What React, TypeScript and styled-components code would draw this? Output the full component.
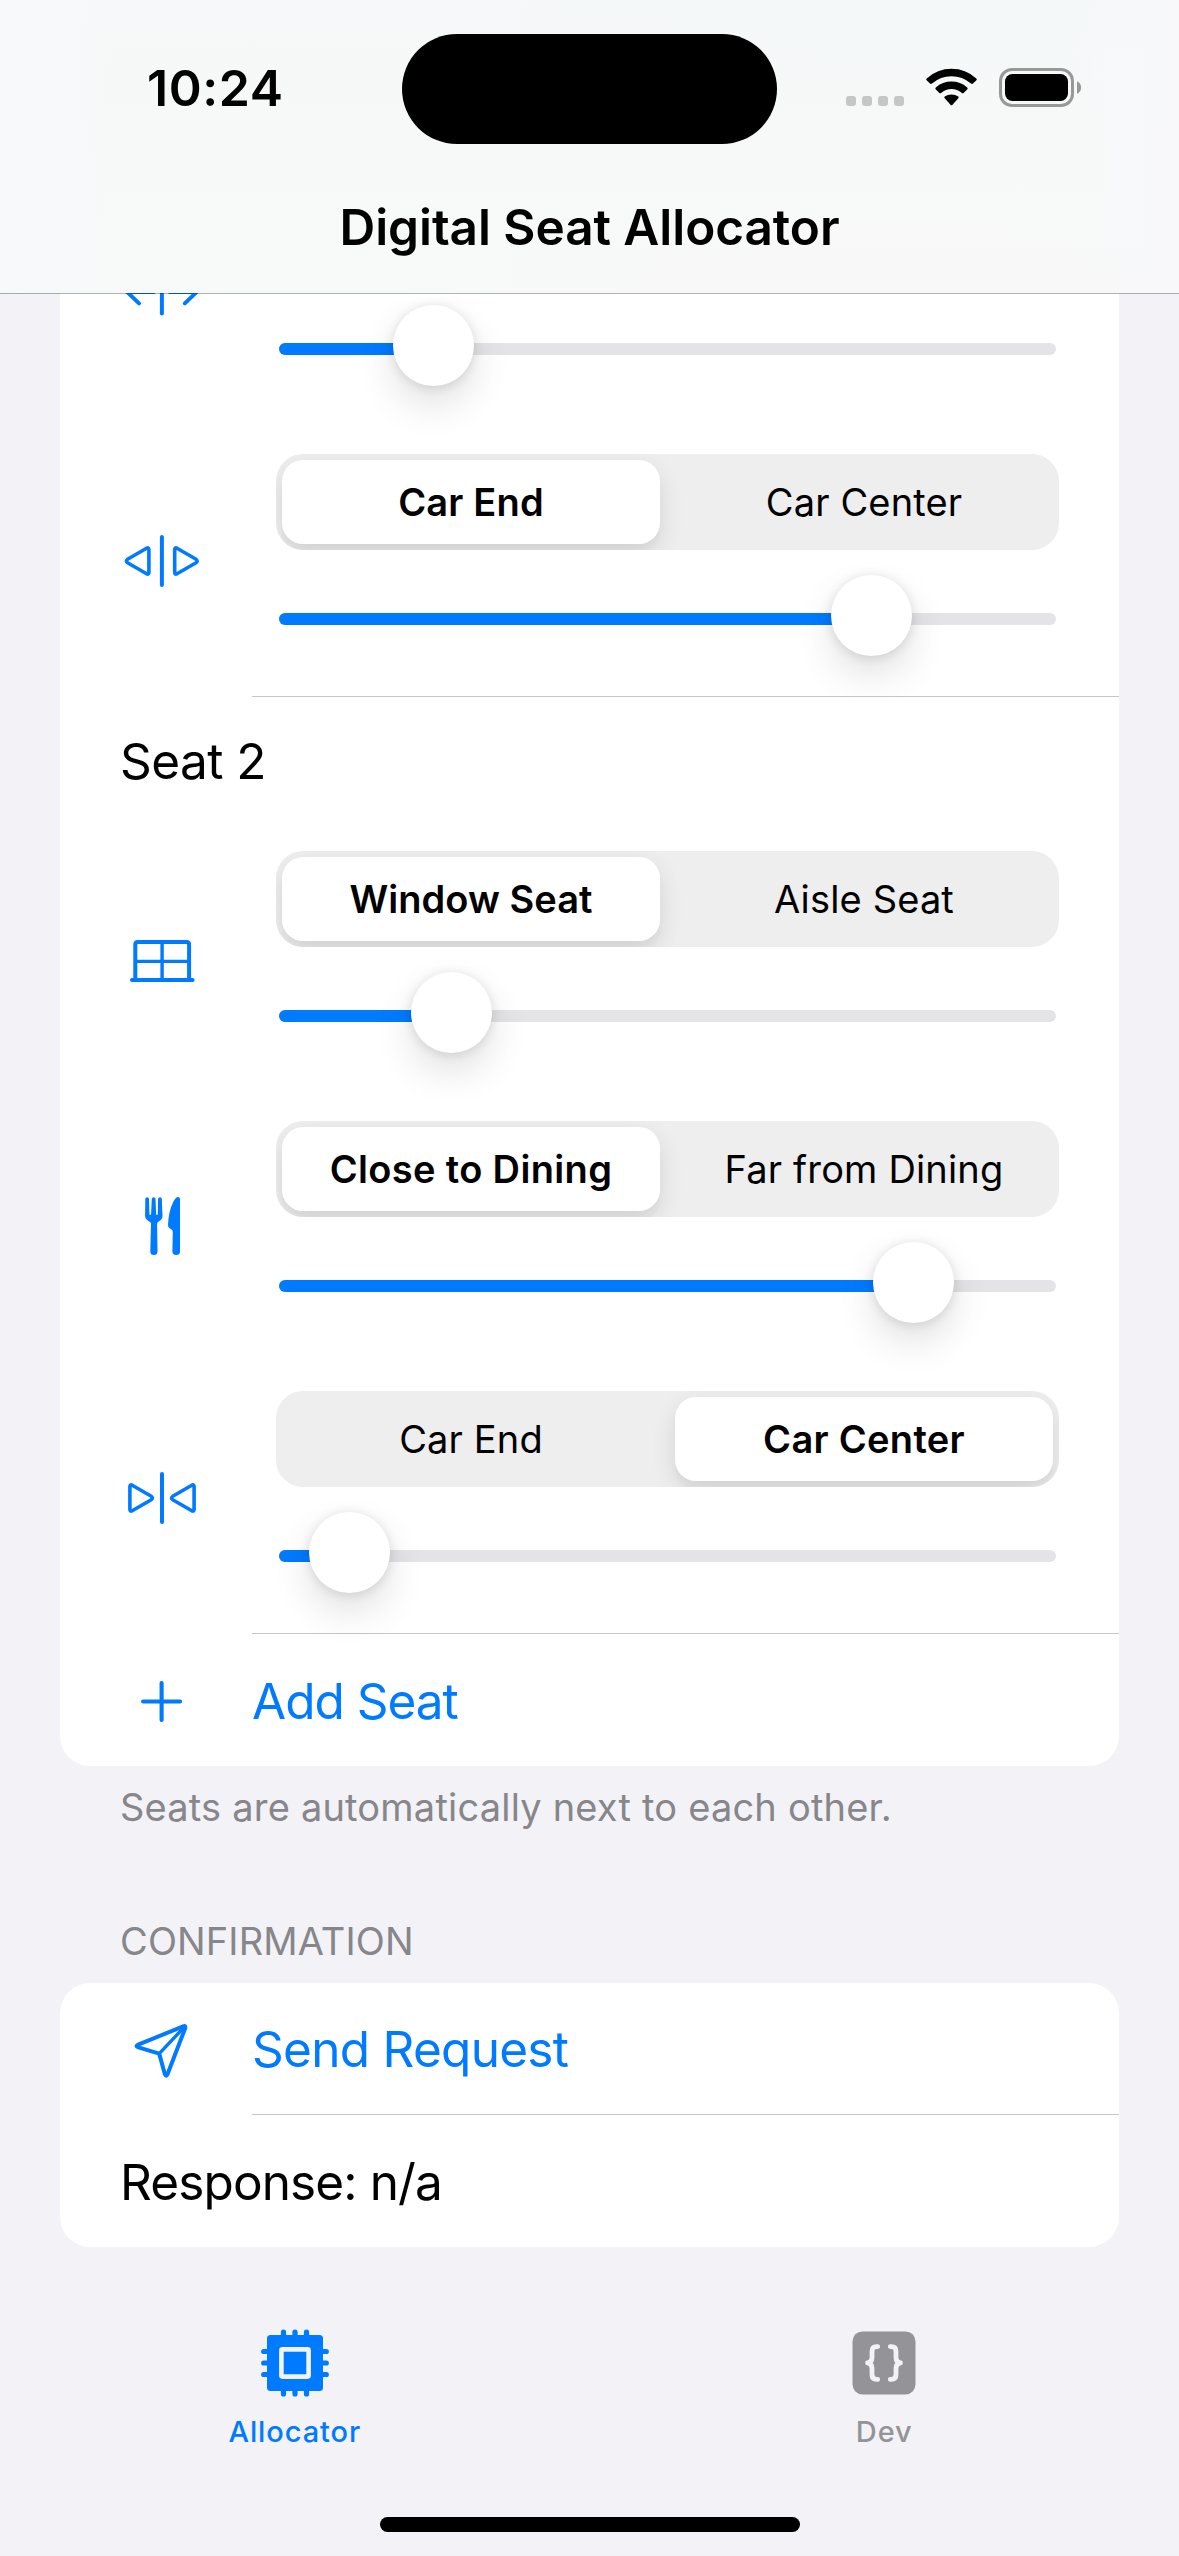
import React from "react";
import styled, { createGlobalStyle } from "styled-components";

const BLUE = "#007aff";
const PAGE = "#f2f2f7";
const HAIRLINE = "#c6c6c8";

const GlobalStyle = createGlobalStyle`
  * { box-sizing: border-box; }
  body {
    margin: 0;
    background: ${PAGE};
    font-family: Inter, "Liberation Sans", sans-serif;
    color: #000;
  }
`;

const Screen = styled.div`
  width: 1179px;
  height: 2556px;
  overflow: hidden;
  display: flex;
  flex-direction: column;
  background: ${PAGE};
`;

/* ---------- Header ---------- */

const Header = styled.header`
  position: relative;
  z-index: 1;
  flex: none;
  height: 294px;
  background:
    linear-gradient(90deg, #f8f9fb 0, rgba(248, 249, 251, 0) 110px, rgba(248, 249, 251, 0) 1069px, #f8f8fb 1179px),
    linear-gradient(100deg, rgba(247, 249, 249, 0.8) 0%, rgba(247, 247, 247, 0) 75%),
    linear-gradient(180deg, #f5f8f9 0%, #f7f9f8 50%, #f8f8f8 100%);
  background-clip: padding-box;
  border-bottom: 1px solid rgba(0, 0, 0, 0.3);
`;

const StatusBar = styled.div`
  display: grid;
  grid-template-columns: 402px 375px 402px;
  align-items: center;
  height: 177px;
`;

const Clock = styled.div`
  padding: 0 0 2px 147px;
  font-size: 50px;
  line-height: 60px;
  font-weight: 580;
  letter-spacing: 0.6px;
`;

const Island = styled.div`
  height: 110px;
  margin-top: 1px;
  border-radius: 55px;
  background: #000;
`;

const Indicators = styled.div`
  display: flex;
  align-items: flex-end;
  height: 39px;
  margin-bottom: 2px;
  padding-left: 69px;
`;

const Dots = styled.div`
  display: flex;
  gap: 6px;
  margin: 0 22px 1px 0;
`;

const Dot = styled.span`
  width: 10px;
  height: 10px;
  border-radius: 3px;
  background: #c6c6c6;
`;

const TitleBar = styled.div`
  display: flex;
  align-items: center;
  justify-content: center;
  height: 116px;
  padding-bottom: 16px;
`;

const Title = styled.h1`
  margin: 0;
  font-size: 49.5px;
  line-height: 60px;
  font-weight: 580;
  letter-spacing: -0.05px;
`;

/* ---------- Form ---------- */

const Form = styled.main`
  flex: none;
  height: 2014px;
  margin-top: -1px;
  padding: 0 60px;
`;

const Card = styled.section<{ $scrolled?: boolean }>`
  background: #fff;
  border-radius: ${(p) => (p.$scrolled ? "0 0 30px 30px" : "30px")};
`;

const Separator = styled.div`
  height: 1px;
  margin-left: 192px;
  background: ${HAIRLINE};
`;

const SeatTitle = styled.div`
  display: flex;
  align-items: center;
  height: 154px;
  padding: 0 0 26px 60px;
  font-size: 49.5px;
  line-height: 60px;
  font-weight: 420;
  letter-spacing: -0.55px;
`;

const PreferenceRow = styled.div<{ $height: number }>`
  display: flex;
  height: ${(p) => p.$height}px;
`;

const IconCell = styled.div<{ $top?: number }>`
  display: flex;
  flex: none;
  justify-content: center;
  align-items: flex-start;
  width: 192px;
  padding-left: 12px;
  margin-top: ${(p) => p.$top ?? 0}px;
  color: ${BLUE};
`;

const Controls = styled.div<{ $top?: number }>`
  width: 783px;
  margin-left: 24px;
  padding-top: ${(p) => p.$top ?? 0}px;
`;

const SegmentedTrack = styled.div`
  display: grid;
  grid-template-columns: 378px 378px;
  column-gap: 15px;
  height: 96px;
  margin-bottom: 25px;
  padding: 6px;
  border-radius: 27px;
  background: #eee;
  overflow: hidden;
`;

const Segment = styled.div<{ $on: boolean; $tracking: number }>`
  display: flex;
  align-items: center;
  justify-content: center;
  height: 84px;
  border-radius: 21px;
  font-size: 38px;
  line-height: 48px;
  white-space: nowrap;
  font-weight: ${(p) => (p.$on ? 560 : 425)};
  letter-spacing: ${(p) => p.$tracking}px;
  background: ${(p) => (p.$on ? "#fff" : "transparent")};
  box-shadow: ${(p) => (p.$on ? "0 9px 24px rgba(0,0,0,.11), 0 9px 3px rgba(0,0,0,.02)" : "none")};
`;

const SliderBox = styled.div`
  display: grid;
  height: 81px;
  padding: 0 3px;
`;

const SliderRail = styled.div`
  grid-area: 1 / 1;
  height: 12px;
  margin-top: 38px;
  border-radius: 6px;
  background: #e4e4e6;
  overflow: hidden;
`;

const SliderFill = styled.div`
  height: 12px;
  background: ${BLUE};
`;

const Thumb = styled.div`
  grid-area: 1 / 1;
  width: 81px;
  height: 81px;
  border-radius: 50%;
  background: #fff;
  box-shadow: 0 18px 39px rgba(0, 0, 0, 0.12), 0 1.5px 12px rgba(0, 0, 0, 0.12);
`;

const ActionRow = styled.div<{ $height?: number }>`
  display: flex;
  align-items: center;
  height: ${(p) => p.$height ?? 132}px;
`;

const ActionLabel = styled.span<{ $tracking: number }>`
  padding: 1px 0 0 0;
  font-size: 49.5px;
  line-height: 60px;
  font-weight: 420;
  letter-spacing: ${(p) => p.$tracking}px;
  color: ${BLUE};
`;

const PlainLabel = styled.span`
  padding: 2px 0 0 60px;
  font-size: 49.5px;
  line-height: 60px;
  font-weight: 420;
  letter-spacing: -0.88px;
`;

const Footnote = styled.p`
  margin: 0;
  padding: 17px 0 0 60px;
  font-size: 38px;
  line-height: 48px;
  font-weight: 420;
  letter-spacing: 0.2px;
  color: #86868b;
`;

const SectionHeader = styled.h2`
  margin: 0;
  padding: 86px 0 18px 60px;
  font-size: 38px;
  line-height: 48px;
  font-weight: 420;
  letter-spacing: 0.12px;
  color: #86868b;
`;

/* ---------- Tab bar ---------- */

const TabBar = styled.nav`
  display: grid;
  grid-template-columns: 1fr 1fr;
  flex: none;
  height: 210px;
`;

const Tab = styled.div<{ $active?: boolean }>`
  display: flex;
  flex-direction: column;
  align-items: center;
  gap: 17px;
  padding-top: 22px;
  color: ${(p) => (p.$active ? BLUE : "#949498")};
`;

const TabLabel = styled.span`
  font-size: 29px;
  line-height: 36px;
  font-weight: 500;
  letter-spacing: 0.9px;
`;

const HomeIndicator = styled.div`
  flex: none;
  width: 420px;
  height: 15px;
  margin: 0 auto;
  border-radius: 8px;
  background: #000;
`;

/* ---------- Icons ---------- */

const RowSvg: React.FC<{ children: React.ReactNode }> = ({ children }) => (
  <svg
    width="80"
    height="64"
    viewBox="0 0 80 64"
    fill="none"
    stroke="currentColor"
    strokeWidth="3.6"
    strokeLinecap="round"
    strokeLinejoin="round"
  >
    {children}
  </svg>
);

const TRIANGLE = "M24.6 19.2 L5.5 30.3 Q3.3 32 5.5 33.7 L24.6 44.8 Q26.9 45.8 26.9 43.5 V20.5 Q26.9 18.2 24.6 19.2Z";

const ArrowsApart = () => (
  <RowSvg>
    <g strokeWidth="4">
      <path d="M39.9 11.3V54.5" />
      <path d="M32 32.9H6M16.7 21.1L5 32.9L17 44.4" />
      <path d="M47.8 32.9H73.8M63.1 21.1L74.8 32.9L62.8 44.4" />
    </g>
  </RowSvg>
);

const TrianglesApart = () => (
  <RowSvg>
    <path d="M39.9 8.1V55.9" strokeWidth="4" />
    <path d={TRIANGLE} />
    <path d={TRIANGLE} transform="translate(79.6 0) scale(-1 1)" />
  </RowSvg>
);

const TrianglesTogether = () => (
  <RowSvg>
    <path d="M40 8.1V55.9" strokeWidth="4" />
    <path d={TRIANGLE} transform="translate(34.8 0) scale(-1 1)" />
    <path d={TRIANGLE} transform="translate(45.2 0)" />
  </RowSvg>
);

const WindowIcon = () => (
  <RowSvg>
    <path d="M13.3 54V18.5Q13.3 16 15.8 16H64.6Q67.1 16 67.1 18.5V54" strokeWidth="4" />
    <path d="M10 54H70.6" strokeWidth="4" />
    <path d="M40.1 16V54M13.3 35.4H67.1" strokeWidth="3.4" strokeLinecap="butt" />
  </RowSvg>
);

const DiningIcon = () => (
  <RowSvg>
    <g fill="currentColor" stroke="none">
      <path d="M25.1 1.2Q26.9 1.2 27 2.8L27.4 18.2Q28.2 19.7 29.1 18.2L29.8 2.8Q30 1.2 31.7 1.2Q33.3 1.2 33.5 2.8L34.1 18.2Q35 19.7 35.8 18.2L36.1 2.8Q36.2 1.2 38 1.2Q39.7 1.2 39.8 2.8L40.5 20Q40.6 23.2 36.7 25.4Q35.1 26.4 35.1 27.6L35.5 55.5Q35.4 59 31.9 59Q28.3 59 28.3 55.5L29 27.6Q29 26.4 27.3 25.4Q23.1 23.2 23.1 20L23.3 2.8Q23.4 1.2 25.1 1.2Z" />
      <path d="M58 3Q58 .9 55.9 .9Q53.8 .9 51.5 5.5Q46.5 15 46 29Q46 31.2 47.6 32.3L49.8 33.7Q50.9 34.5 50.8 36L50.4 55.5Q50.6 59 54.2 59Q58 59 58 55.5Z" />
    </g>
  </RowSvg>
);

const PlusIcon = () => (
  <RowSvg>
    <path d="M39.6 15V52M21.1 33.5H58.1" strokeWidth="4.1" />
  </RowSvg>
);

const PlaneIcon = () => (
  <RowSvg>
    <g strokeWidth="4">
      <path d="M61.2 9.4L16.2 27.6Q12.8 29.1 16.4 30.4L37.2 36.6L42.8 57Q44.2 60.6 45.6 57L63.2 11.2Q63.9 8.3 61.2 9.4Z" />
      <path d="M37.2 36.6L61.8 10.6" strokeWidth="3.4" />
    </g>
  </RowSvg>
);

const WifiSvg = styled.svg`
  margin: 0 22px 1px 0;
`;

const WifiIcon = () => (
  <WifiSvg width="51" height="38" viewBox="0 0 51 38">
    <path d="M0.6 12.2Q-.2 11.3.7 10.4Q11.3.7 25.5.7T50.3 10.4Q51.2 11.3 50.4 12.2L47 15.6Q46 16.3 45 15.5Q36.5 8.2 25.5 8.2T6 15.5Q5 16.3 4 15.6Z" />
    <path d="M9.6 21.2Q8.9 20.3 9.8 19.5Q16.5 13.6 25.5 13.6T41.2 19.5Q42.1 20.3 41.4 21.2L37.6 24.9Q36.8 25.6 35.9 24.9Q31.3 21.1 25.5 21.1T15.1 24.9Q14.2 25.6 13.4 24.9Z" />
    <path d="M18.5 29.9Q17.9 29.1 18.7 28.5Q21.6 26.4 25.5 26.4T32.3 28.5Q33.1 29.1 32.5 29.9L26.3 36.9Q25.5 37.7 24.7 36.9Z" />
  </WifiSvg>
);

const BatteryIcon = () => (
  <svg width="83" height="39" viewBox="0 0 83 39">
    <rect x="1.5" y="1.5" width="72" height="36" rx="11.5" fill="none" stroke="#989898" strokeWidth="3" />
    <rect x="6" y="6" width="63" height="27" rx="7.5" />
    <path d="M78 13.2Q82.1 15.2 82.1 19.5T78 25.8Z" fill="#989898" />
  </svg>
);

const PINS = [-11.5, 0, 11.5];

const ChipIcon = () => (
  <svg width="70" height="68" viewBox="-35 -34 70 68" fill="currentColor">
    <rect x="-28" y="-28" width="56" height="56" rx="3.5" />
    {PINS.map((p) => (
      <g key={p} stroke="currentColor" strokeWidth="5.2" strokeLinecap="round">
        <path d={`M${p} -31V31M-31.3 ${p}H31.3`} />
      </g>
    ))}
    <rect x="-13.6" y="-13.6" width="27.2" height="27.2" rx="1" stroke={PAGE} strokeWidth="4.6" />
  </svg>
);

const BracesIcon = () => (
  <svg width="70" height="68" viewBox="-35 -34 70 68">
    <rect x="-31.5" y="-31.6" width="63" height="63" rx="10" fill="currentColor" />
    <g fill="none" stroke={PAGE} strokeWidth="4.8" strokeLinecap="round" strokeLinejoin="round">
      <path d="M-6.3 -16.4H-7.5Q-12 -16.4 -12 -11.6V-5.2Q-12 -1 -16.4 -.1Q-12 .8 -12 5V11.6Q-12 16.4 -7.5 16.4H-6.3" />
      <path d="M6.3 -16.4H7.5Q12 -16.4 12 -11.6V-5.2Q12 -1 16.4 -.1Q12 .8 12 5V11.6Q12 16.4 7.5 16.4H6.3" />
    </g>
  </svg>
);

/* ---------- Parts ---------- */

const Slider: React.FC<{ offset: number }> = ({ offset }) => (
  <SliderBox>
    <SliderRail>
      <SliderFill style={{ width: offset + 40 }} />
    </SliderRail>
    <Thumb style={{ marginLeft: offset }} />
  </SliderBox>
);

type Option = { label: string; tracking: number };

const Segmented: React.FC<{ options: Option[]; selected: number }> = ({ options, selected }) => (
  <SegmentedTrack>
    {options.map((o, i) => (
      <Segment key={o.label} $on={i === selected} $tracking={o.tracking}>
        {o.label}
      </Segment>
    ))}
  </SegmentedTrack>
);

type PreferenceProps = {
  icon: React.ReactNode;
  options: Option[];
  selected: number;
  offset: number;
  last?: boolean;
};

const Preference: React.FC<PreferenceProps> = ({ icon, options, selected, offset, last }) => (
  <PreferenceRow $height={last ? 242 : 270}>
    <IconCell $top={75}>{icon}</IconCell>
    <Controls>
      <Segmented options={options} selected={selected} />
      <Slider offset={offset} />
    </Controls>
  </PreferenceRow>
);

export default function App() {
  return (
    <Screen>
      <GlobalStyle />
      <Header>
        <StatusBar>
          <Clock>10:24</Clock>
          <Island />
          <Indicators>
            <Dots>
              <Dot />
              <Dot />
              <Dot />
              <Dot />
            </Dots>
            <WifiIcon />
            <BatteryIcon />
          </Indicators>
        </StatusBar>
        <TitleBar>
          <Title>Digital Seat Allocator</Title>
        </TitleBar>
      </Header>

      <Form>
        <Card $scrolled>
          <PreferenceRow $height={161}>
            <IconCell $top={-34}>
              <ArrowsApart />
            </IconCell>
            <Controls $top={12}>
              <Slider offset={114} />
            </Controls>
          </PreferenceRow>
          <Preference
            icon={<TrianglesApart />}
            options={[
              { label: "Car End", tracking: 0.18 },
              { label: "Car Center", tracking: 0.15 },
            ]}
            selected={0}
            offset={552}
            last
          />
          <Separator />
          <SeatTitle>Seat 2</SeatTitle>
          <Preference
            icon={<WindowIcon />}
            options={[
              { label: "Window Seat", tracking: 0.05 },
              { label: "Aisle Seat", tracking: 0.15 },
            ]}
            selected={0}
            offset={132}
          />
          <Preference
            icon={<DiningIcon />}
            options={[
              { label: "Close to Dining", tracking: 0.35 },
              { label: "Far from Dining", tracking: 0.17 },
            ]}
            selected={0}
            offset={594}
          />
          <Preference
            icon={<TrianglesTogether />}
            options={[
              { label: "Car End", tracking: 0.15 },
              { label: "Car Center", tracking: 0.3 },
            ]}
            selected={1}
            offset={30}
            last
          />
          <Separator />
          <ActionRow>
            <IconCell>
              <PlusIcon />
            </IconCell>
            <ActionLabel $tracking={-1}>Add Seat</ActionLabel>
          </ActionRow>
        </Card>
        <Footnote>Seats are automatically next to each other.</Footnote>
        <SectionHeader>CONFIRMATION</SectionHeader>
        <Card>
          <ActionRow $height={131}>
            <IconCell>
              <PlaneIcon />
            </IconCell>
            <ActionLabel $tracking={-0.72}>Send Request</ActionLabel>
          </ActionRow>
          <Separator />
          <ActionRow>
            <PlainLabel>Response: n/a</PlainLabel>
          </ActionRow>
        </Card>
      </Form>

      <TabBar>
        <Tab $active>
          <ChipIcon />
          <TabLabel>Allocator</TabLabel>
        </Tab>
        <Tab>
          <BracesIcon />
          <TabLabel>Dev</TabLabel>
        </Tab>
      </TabBar>
      <HomeIndicator />
    </Screen>
  );
}
